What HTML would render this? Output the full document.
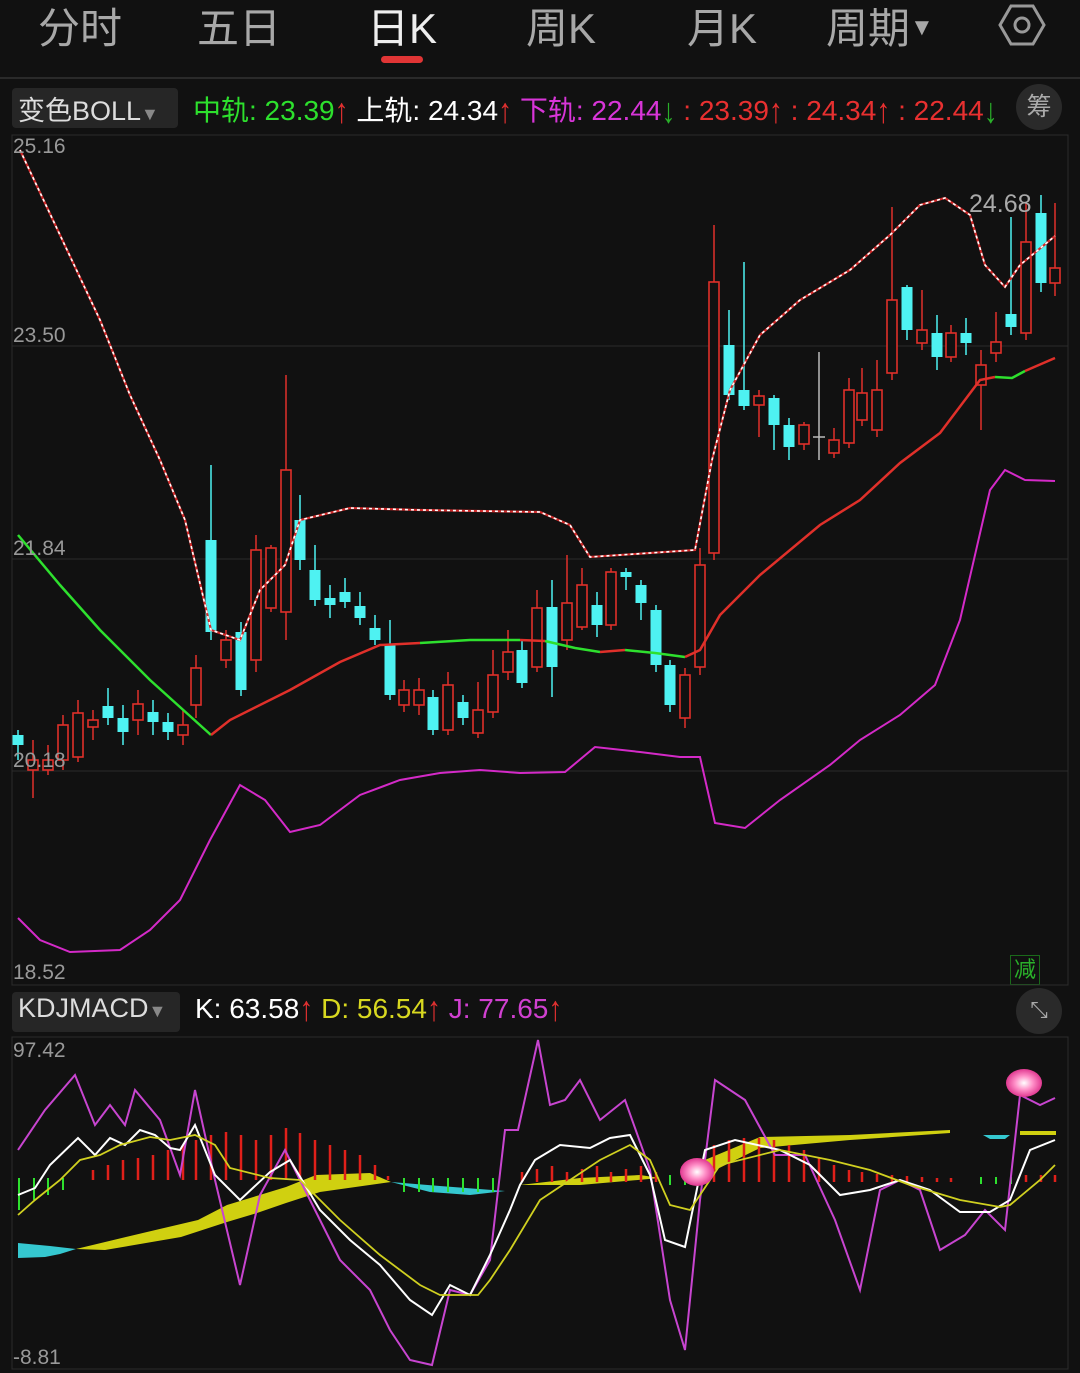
<!DOCTYPE html>
<html><head><meta charset="utf-8"><style>
body{margin:0;background:#111;width:1080px;height:1373px;overflow:hidden;font-family:"Liberation Sans","Noto Sans CJK SC",sans-serif;}
.t{position:absolute;font-size:42px;color:#a8a8a8;top:-5px;}
.lg{position:absolute;font-size:28px;white-space:nowrap;}
.ar{display:inline-block;transform:scaleY(1.25);}
.lab{position:absolute;font-size:21px;color:#999;}
</style></head><body>
<div class="t" style="left:38px">分时</div>
<div class="t" style="left:197px">五日</div>
<div class="t" style="left:367px;color:#eee">日K</div>
<div class="t" style="left:526px">周K</div>
<div class="t" style="left:687px">月K</div>
<div class="t" style="left:826px">周期<span style="font-size:24px;vertical-align:8px">▼</span></div>
<div style="position:absolute;left:381px;top:56px;width:42px;height:7px;border-radius:4px;background:#e03535"></div>
<svg style="position:absolute;left:998px;top:1px" width="48" height="48" viewBox="0 0 48 48"><polygon points="13,5 35,5 46,24 35,43 13,43 2,24" fill="none" stroke="#999" stroke-width="3"/><circle cx="24" cy="24" r="7" fill="none" stroke="#999" stroke-width="3"/></svg>
<div style="position:absolute;left:0;top:77px;width:1080px;height:2px;background:#2a2a2a"></div>
<div style="position:absolute;left:12px;top:88px;width:166px;height:40px;background:#262626;border-radius:4px"></div>
<div class="lg" style="left:18px;top:89px;color:#ddd;font-size:27px">变色BOLL<span style="color:#888;font-size:18px">▼</span></div>
<div class="lg" style="left:193px;top:89px"><span style="color:#2de02d">中轨: 23.39</span><span class="ar" style="color:#e03030">↑</span> <span style="color:#fff">上轨: 24.34</span><span class="ar" style="color:#e03030">↑</span> <span style="color:#d835d8">下轨: 22.44</span><span class="ar" style="color:#2ab02a">↓</span> <span style="color:#e83030">: 23.39<span class="ar">↑</span> : 24.34<span class="ar">↑</span> : 22.44</span><span class="ar" style="color:#2ab02a">↓</span></div>
<div style="position:absolute;left:1016px;top:84px;width:46px;height:46px;border-radius:23px;background:#2a2a2a;color:#aaa;font-size:25px;text-align:center;line-height:46px">筹</div>
<div style="position:absolute;left:12px;top:992px;width:168px;height:40px;background:#262626;border-radius:4px"></div>
<div class="lg" style="left:18px;top:993px;color:#ddd;font-size:27px">KDJMACD<span style="color:#888;font-size:18px">▼</span></div>
<div class="lg" style="left:195px;top:993px"><span style="color:#fff">K: 63.58</span><span class="ar" style="color:#e03030">↑</span> <span style="color:#d8d820">D: 56.54</span><span class="ar" style="color:#e03030">↑</span> <span style="color:#d040d0">J: 77.65</span><span class="ar" style="color:#e03030">↑</span></div>
<div style="position:absolute;left:1016px;top:988px;width:46px;height:46px;border-radius:23px;background:#2a2a2a;color:#aaa;font-size:22px;text-align:center;line-height:44px">⤡</div>
<div style="position:absolute;left:1010px;top:955px;width:28px;height:28px;border:1px solid #1a6a1a;color:#2ab02a;font-size:22px;line-height:28px;text-align:center">减</div>
<svg id="c" style="position:absolute;left:0;top:0" width="1080" height="1373"></svg>
<div class="lab" style="left:13px;top:135px">25.16</div>
<div class="lab" style="left:13px;top:324px">23.50</div>
<div class="lab" style="left:13px;top:537px">21.84</div>
<div class="lab" style="left:13px;top:749px">20.18</div>
<div class="lab" style="left:13px;top:961px">18.52</div>
<div class="lab" style="left:969px;top:190px;font-size:25px;color:#aaa">24.68</div>
<div class="lab" style="left:13px;top:1039px">97.42</div>
<div class="lab" style="left:13px;top:1346px">-8.81</div>
<script>
var s='';
function L(a,b,c,d,col,w){s+='<line x1="'+a+'" y1="'+b+'" x2="'+c+'" y2="'+d+'" stroke="'+col+'" stroke-width="'+(w||1)+'"/>';}
function P(pts,col,w,ex){s+='<polyline fill="none" stroke="'+col+'" stroke-width="'+w+'" '+(ex||'')+' points="'+pts+'"/>';}
s+='<rect x="12" y="135" width="1056" height="850" fill="none" stroke="#2c2c2c"/>';
s+='<rect x="12" y="1037" width="1056" height="332" fill="none" stroke="#2c2c2c"/>';
[346,559,771].forEach(function(y){L(12,y,1068,y,'#2c2c2c');});
var C=[[18,'c',735,745,730,760],[33,'r',760,770,740,798],[48,'r',760,770,745,775],[63,'r',725,760,715,770],[78,'r',713,757,700,762],[93,'r',720,727,710,740],[108,'c',706,718,688,725],[123,'c',718,732,705,745],[138,'r',704,720,690,735],[153,'c',712,722,700,735],[168,'c',722,732,713,740],[183,'r',725,735,710,745],[196,'r',668,705,655,718],[211,'c',540,632,465,640],[226,'r',640,660,630,668],[241,'c',632,690,622,696],[256,'r',550,660,535,672],[271,'r',548,608,545,612],[286,'r',470,612,375,640],[300,'c',520,560,495,570],[315,'c',570,600,545,606],[330,'c',598,605,585,618],[345,'c',592,602,578,608],[360,'c',606,618,592,625],[375,'c',628,640,615,645],[390,'c',645,695,620,700],[404,'r',690,705,680,712],[419,'r',690,705,678,715],[433,'c',697,730,690,735],[448,'r',685,730,672,735],[463,'c',702,718,695,725],[478,'r',710,733,682,738],[493,'r',675,712,650,718],[508,'r',652,672,630,680],[522,'c',650,683,640,688],[537,'r',608,667,590,672],[552,'c',607,667,580,697],[567,'r',603,640,555,650],[582,'r',585,627,568,630],[597,'c',605,625,592,637],[611,'r',572,625,568,630],[626,'c',572,577,568,590],[641,'c',585,603,580,620],[656,'c',610,665,605,672],[670,'c',665,705,660,712],[685,'r',675,718,668,728],[700,'r',565,667,548,675],[714,'r',282,553,225,560],[729,'c',345,395,310,400],[744,'c',390,406,262,410],[759,'r',396,405,390,437],[774,'c',398,425,395,450],[789,'c',425,447,418,460],[804,'r',425,444,422,450],[834,'r',440,453,428,458],[849,'r',390,443,378,448],[862,'r',393,420,368,426],[877,'r',390,430,360,437],[892,'r',300,373,207,380],[907,'c',287,330,285,340],[922,'r',330,343,290,350],[937,'c',333,357,315,370],[951,'r',333,357,325,362],[966,'c',333,343,318,355],[981,'r',365,385,350,430],[996,'r',342,353,312,362],[1011,'c',314,327,217,335],[1026,'r',242,333,203,340],[1041,'c',213,283,195,292],[1055,'r',268,283,203,296]];
C.forEach(function(k){var x=k[0],col=k[1]=='r'?'#e0302a':'#4ef2f2';L(x,k[4],x,k[2],col,1.5);L(x,k[3],x,k[5],col,1.5);
if(k[1]=='r')s+='<rect x="'+(x-5)+'" y="'+k[2]+'" width="10" height="'+(k[3]-k[2])+'" fill="#111" stroke="'+col+'" stroke-width="1.6"/>';else s+='<rect x="'+(x-5.5)+'" y="'+k[2]+'" width="11" height="'+Math.max(k[3]-k[2],3)+'" fill="'+col+'"/>';});
L(819,352,819,460,'#bbb',1.5);L(813,437,825,437,'#bbb',1.5);
P('18,535 60,585 100,630 150,680 211,735','#2ee02e',2.5);
P('211,735 230,720 290,690 340,662 380,645 420,643','#e0302a',2.5);
P('420,643 470,640 520,640','#2ee02e',2.5);P('520,640 545,641','#e0302a',2.5);P('545,641 575,648 600,652','#2ee02e',2.5);P('600,652 625,650','#e0302a',2.5);P('625,650 655,653 685,657','#2ee02e',2.5);
P('685,657 700,650 720,615 760,575 820,525 860,500 900,463 940,433 980,380 995,377','#e0302a',2.5);
P('995,377 1012,378 1025,371','#2ee02e',2.5);P('1025,371 1055,358','#e0302a',2.5);
var up='20,150 60,235 100,320 130,395 160,460 185,520 211,630 240,640 260,590 285,565 300,520 350,508 420,510 540,512 570,525 590,557 650,553 695,550 712,460 730,390 760,335 800,300 850,270 890,235 920,205 945,198 970,215 985,265 1005,287 1020,265 1055,236';
P(up,'#d02a2a',2.2);P(up,'#fff',1.6,'stroke-dasharray="3,3"');
var lo='18,918 40,940 70,952 120,950 150,930 180,900 210,840 240,785 265,800 290,832 320,825 360,795 400,780 440,773 480,770 520,773 565,772 595,747 640,752 680,757 700,757 715,823 745,828 780,800 830,765 860,740 900,715 935,685 960,620 990,490 1005,470 1025,480 1055,481';
P(lo,'#d42ac8',2);
// MACD
s+='<polygon fill="#35c8d0" points="18,1243 50,1246 76,1249 60,1254 45,1257 18,1258"/>';
s+='<polygon fill="#d0d010" points="76,1249 147,1232 198,1220 227,1205 286,1187 316,1175 370,1173 391,1182 320,1192 286,1203 257,1213 227,1222 181,1237 105,1250"/>';
s+='<polygon fill="#35c8d0" points="391,1182 440,1186 505,1191 470,1195 430,1192"/>';
s+='<polygon fill="#d0d010" points="520,1185 580,1178 640,1175 660,1178 580,1185"/>';
s+='<polygon fill="#d0d010" points="700,1162 760,1137 850,1135 950,1130 950,1133 850,1140 760,1148 705,1175"/>';
s+='<polygon fill="#35c8d0" points="983,1135 1010,1135 1005,1139 990,1139"/>';
s+='<rect x="1020" y="1131" width="36" height="4" fill="#d0d010"/>';
[[19,1178,1210],[34,1178,1200],[48,1178,1195],[63,1178,1190]].forEach(function(b){L(b[0],b[1],b[0],b[2],'#2ee02e',2);});
var rb=[[93,1170],[108,1165],[123,1160],[138,1158],[153,1155],[168,1150],[183,1145],[196,1140],[211,1135],[226,1132],[241,1135],[256,1140],[271,1135],[286,1128],[300,1133],[315,1140],[330,1145],[345,1150],[360,1155],[375,1165],[388,1176]];
rb.forEach(function(b){L(b[0],b[1],b[0],1180,'#e0201a',2.5);});
[404,419,433,448,463,478,493].forEach(function(x){L(x,1178,x,1192,'#2ee02e',2);});
[522,537,552,567,582,597,611,626,641,656].forEach(function(x,i){L(x,1172-i%3*3,x,1182,'#e0201a',2.5);});
[670,685].forEach(function(x){L(x,1175,x,1185,'#2ee02e',2);});
[[714,1145],[729,1140],[744,1138],[759,1138],[774,1140],[789,1145],[804,1150],[819,1158],[834,1165],[849,1170],[862,1172],[877,1174],[892,1175],[907,1176],[922,1177],[937,1178],[951,1178]].forEach(function(b){L(b[0],b[1],b[0],1182,'#e0201a',2.5);});
[981,996,1011].forEach(function(x){L(x,1177,x,1184,'#2ee02e',2);});[1026,1041,1055].forEach(function(x){L(x,1175,x,1182,'#e0201a',2.5);});
P('18,1150 45,1110 75,1075 95,1125 110,1105 125,1125 135,1090 160,1120 180,1175 195,1090 215,1180 240,1285 260,1195 285,1150 310,1200 340,1260 370,1290 390,1330 410,1360 432,1365 450,1290 470,1295 490,1260 505,1130 518,1130 538,1040 550,1105 565,1100 580,1080 600,1120 625,1100 650,1170 670,1300 685,1350 700,1200 715,1080 745,1100 775,1155 805,1155 835,1220 860,1290 880,1190 900,1180 920,1190 940,1250 965,1235 985,1210 1005,1230 1020,1095 1040,1105 1055,1098','#c845d0',2);
P('18,1195 35,1188 50,1165 78,1138 95,1155 110,1138 125,1145 140,1130 155,1135 170,1148 180,1150 195,1125 215,1175 240,1200 270,1172 290,1160 320,1210 350,1240 380,1265 410,1300 432,1315 450,1285 470,1295 490,1255 510,1210 520,1185 535,1160 560,1145 590,1148 610,1138 630,1135 650,1175 665,1240 685,1247 705,1150 735,1140 780,1150 810,1165 840,1195 870,1190 900,1180 930,1190 960,1212 990,1212 1010,1200 1030,1150 1055,1140','#fff',2);
P('18,1215 35,1200 60,1180 80,1160 100,1155 120,1145 150,1137 170,1140 195,1135 215,1145 230,1168 270,1178 300,1180 340,1220 380,1255 420,1285 440,1295 478,1295 490,1280 510,1250 540,1200 570,1180 600,1160 630,1145 650,1160 670,1205 690,1210 720,1165 780,1150 830,1160 870,1170 910,1185 960,1200 1000,1207 1010,1205 1040,1180 1055,1165','#d0d020',1.8);
s+='<defs><radialGradient id="g"><stop offset="0" stop-color="#fff"/><stop offset=".5" stop-color="#ff90c8"/><stop offset="1" stop-color="#e03890"/></radialGradient></defs>';
s+='<ellipse cx="697" cy="1172" rx="17" ry="14" fill="url(#g)"/><ellipse cx="1024" cy="1083" rx="18" ry="14" fill="url(#g)"/>';
document.getElementById('c').innerHTML=s;
</script>
</body></html>
